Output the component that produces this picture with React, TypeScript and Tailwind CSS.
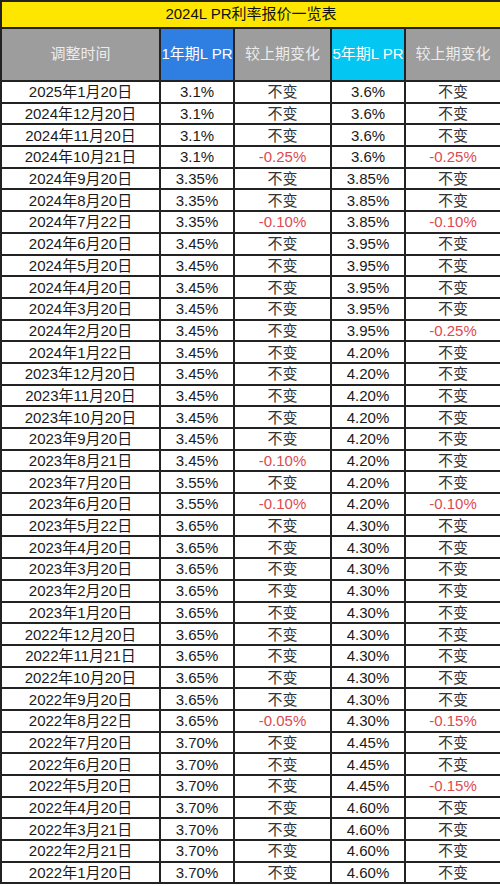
import React from 'react';

type Row = [string, string, string, string, string];

const rows: Row[] = [
  ['2025年1月20日', '3.1%', '不变', '3.6%', '不变'],
  ['2024年12月20日', '3.1%', '不变', '3.6%', '不变'],
  ['2024年11月20日', '3.1%', '不变', '3.6%', '不变'],
  ['2024年10月21日', '3.1%', '-0.25%', '3.6%', '-0.25%'],
  ['2024年9月20日', '3.35%', '不变', '3.85%', '不变'],
  ['2024年8月20日', '3.35%', '不变', '3.85%', '不变'],
  ['2024年7月22日', '3.35%', '-0.10%', '3.85%', '-0.10%'],
  ['2024年6月20日', '3.45%', '不变', '3.95%', '不变'],
  ['2024年5月20日', '3.45%', '不变', '3.95%', '不变'],
  ['2024年4月20日', '3.45%', '不变', '3.95%', '不变'],
  ['2024年3月20日', '3.45%', '不变', '3.95%', '不变'],
  ['2024年2月20日', '3.45%', '不变', '3.95%', '-0.25%'],
  ['2024年1月22日', '3.45%', '不变', '4.20%', '不变'],
  ['2023年12月20日', '3.45%', '不变', '4.20%', '不变'],
  ['2023年11月20日', '3.45%', '不变', '4.20%', '不变'],
  ['2023年10月20日', '3.45%', '不变', '4.20%', '不变'],
  ['2023年9月20日', '3.45%', '不变', '4.20%', '不变'],
  ['2023年8月21日', '3.45%', '-0.10%', '4.20%', '不变'],
  ['2023年7月20日', '3.55%', '不变', '4.20%', '不变'],
  ['2023年6月20日', '3.55%', '-0.10%', '4.20%', '-0.10%'],
  ['2023年5月22日', '3.65%', '不变', '4.30%', '不变'],
  ['2023年4月20日', '3.65%', '不变', '4.30%', '不变'],
  ['2023年3月20日', '3.65%', '不变', '4.30%', '不变'],
  ['2023年2月20日', '3.65%', '不变', '4.30%', '不变'],
  ['2023年1月20日', '3.65%', '不变', '4.30%', '不变'],
  ['2022年12月20日', '3.65%', '不变', '4.30%', '不变'],
  ['2022年11月21日', '3.65%', '不变', '4.30%', '不变'],
  ['2022年10月20日', '3.65%', '不变', '4.30%', '不变'],
  ['2022年9月20日', '3.65%', '不变', '4.30%', '不变'],
  ['2022年8月22日', '3.65%', '-0.05%', '4.30%', '-0.15%'],
  ['2022年7月20日', '3.70%', '不变', '4.45%', '不变'],
  ['2022年6月20日', '3.70%', '不变', '4.45%', '不变'],
  ['2022年5月20日', '3.70%', '不变', '4.45%', '-0.15%'],
  ['2022年4月20日', '3.70%', '不变', '4.60%', '不变'],
  ['2022年3月21日', '3.70%', '不变', '4.60%', '不变'],
  ['2022年2月21日', '3.70%', '不变', '4.60%', '不变'],
  ['2022年1月20日', '3.70%', '不变', '4.60%', '不变'],
];

function Change({ value }: { value: string }) {
  const down = value.startsWith('-');
  return <span className={down ? 'text-[#dc4a50]' : 'text-[#333]'}>{value}</span>;
}

export default function App() {
  const cell = 'border-2 border-[#222] text-center p-0 leading-none';
  const head = 'border-2 border-[#222] text-center p-0 font-normal text-[15px]';

  return (
    <div
      className="w-[500px] h-[886px] bg-white overflow-hidden"
      style={{ fontFamily: '"Liberation Sans", "Noto Sans CJK SC", sans-serif' }}
    >
      <table className="w-[500px] table-fixed border-collapse text-[15px] text-[#1a1a1a]">
        <colgroup>
          <col className="w-[159px]" />
          <col className="w-[74px]" />
          <col className="w-[97px]" />
          <col className="w-[74px]" />
          <col className="w-[96px]" />
        </colgroup>
        <thead>
          <tr className="h-[27px]">
            <th colSpan={5} className={`${head} bg-[#ffe600] text-[#111]`}>
              2024L PR利率报价一览表
            </th>
          </tr>
          <tr className="h-[53px]">
            <th className={`${head} bg-[#9d9d9d] text-[#ececec]`}>调整时间</th>
            <th className={`${head} bg-[#2f7fe3] text-white`}>1年期L PR</th>
            <th className={`${head} bg-[#9d9d9d] text-[#ececec]`}>较上期变化</th>
            <th className={`${head} bg-[#04c6f2] text-white`}>5年期L PR</th>
            <th className={`${head} bg-[#9d9d9d] text-[#ececec]`}>较上期变化</th>
          </tr>
        </thead>
        <tbody>
          {rows.map((r) => (
            <tr key={r[0]} className="h-[21.7px]">
              <td className={cell}>{r[0]}</td>
              <td className={cell}>{r[1]}</td>
              <td className={cell}>
                <Change value={r[2]} />
              </td>
              <td className={cell}>{r[3]}</td>
              <td className={cell}>
                <Change value={r[4]} />
              </td>
            </tr>
          ))}
        </tbody>
      </table>
    </div>
  );
}
